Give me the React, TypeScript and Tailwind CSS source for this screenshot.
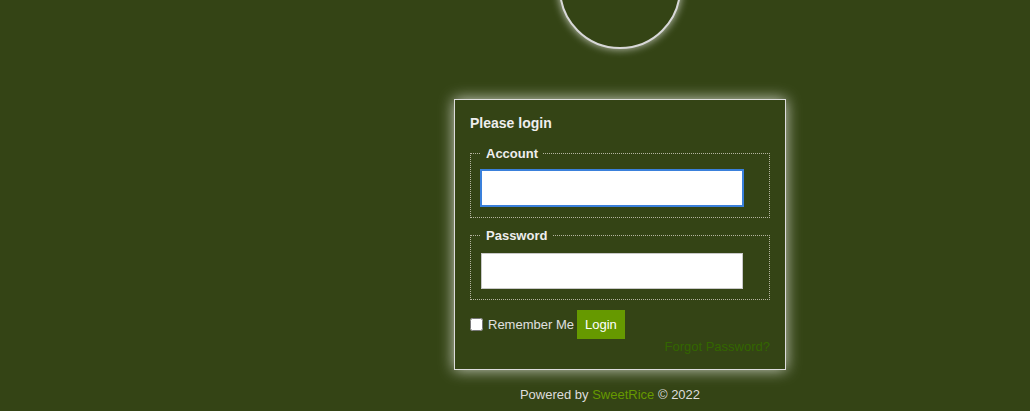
export default function App() {
  return (
    <div
      className="min-h-screen w-full bg-[#344415] overflow-hidden text-[13px] text-[#e0e0e0]"
      style={{ fontFamily: '"Liberation Sans", Arial, sans-serif' }}
    >
      <div className="flex flex-col items-center pl-[210px]">
        <div className="mt-[-73px] w-[122px] h-[122px] rounded-full border-2 border-[#d8d8d8] shadow-[0_0_8px_rgba(255,255,255,0.75)] bg-[#344415]" />

        <div className="mt-[50px] w-[332px] border border-[#dcdcdc] bg-[#344415] px-[15px] pt-[15px] pb-[15px] shadow-[0_0_14px_rgba(255,255,255,0.75)]">
          <h2 className="text-[14px] font-bold leading-[17px] text-[#eeeeee]">Please login</h2>

          <fieldset className="mt-[14px] border border-dotted border-[#b5b5a0] px-[10px] pb-[10px]">
            <legend className="ml-0 px-[5px] text-[13px] font-bold leading-[15px] text-[#eeeeee]">Account</legend>
            <input
              type="text"
              className="mt-[8px] ml-[-1px] block w-[264px] h-[38px] bg-white border-2 border-[#3a80db] outline-none"
            />
          </fieldset>

          <fieldset className="mt-[10px] border border-dotted border-[#b5b5a0] px-[10px] pb-[10px]">
            <legend className="px-[5px] text-[13px] font-bold leading-[15px] text-[#eeeeee]">Password</legend>
            <input
              type="password"
              className="mt-[10px] block w-[262px] h-[36px] bg-white border border-[#c8c8c8] outline-none"
            />
          </fieldset>

          <div className="mt-[10px] flex items-center">
            <input type="checkbox" className="m-0 w-[13px] h-[13px]" />
            <span className="ml-[5px] text-[13px] text-[#e0e0e0]">Remember Me</span>
            <button className="ml-[3px] h-[29px] px-[8px] bg-[#669900] text-white text-[13px]">Login</button>
          </div>
          <div className="text-right leading-[15px]">
            <a className="text-[13px] text-[#336600]">Forgot Password?</a>
          </div>
        </div>
      </div>

      <div className="pl-[190px] mt-[15px] text-center text-[13px] text-[#dddddd]">
        Powered by <a className="text-[#669900]">SweetRice</a> © 2022
      </div>
    </div>
  );
}
